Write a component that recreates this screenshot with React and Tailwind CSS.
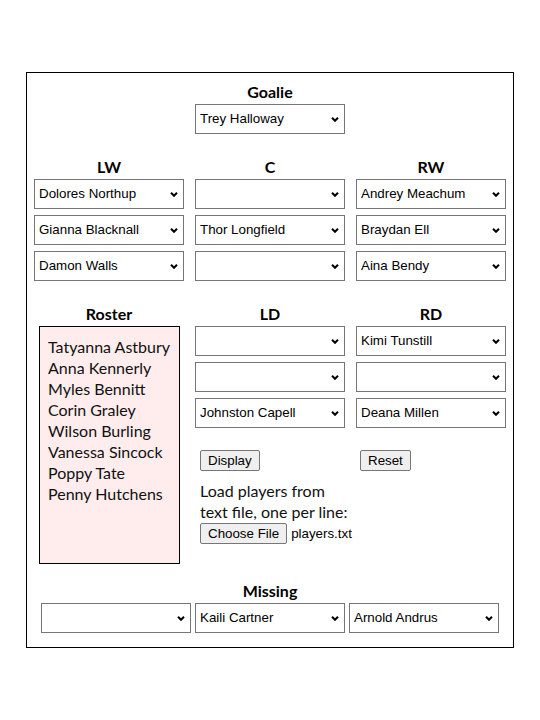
import React, { useState } from 'react';

const players = [
  'Trey Halloway', 'Dolores Northup', 'Gianna Blacknall', 'Damon Walls', 'Thor Longfield',
  'Andrey Meachum', 'Braydan Ell', 'Aina Bendy', 'Kimi Tunstill', 'Johnston Capell',
  'Deana Millen', 'Kaili Cartner', 'Arnold Andrus'
];

const roster = [
  'Tatyanna Astbury', 'Anna Kennerly', 'Myles Bennitt', 'Corin Graley',
  'Wilson Burling', 'Vanessa Sincock', 'Poppy Tate', 'Penny Hutchens'
];

const arial = { fontFamily: '"Liberation Sans", Arial, sans-serif' };

// select with its own chevron so it renders the same everywhere
const PlayerSelect = ({ value }) => {
  const [val, setVal] = useState(value || '');
  return (
    <div className="relative w-[150px] h-[30px]">
      <select
        value={val}
        onChange={(e) => setVal(e.target.value)}
        className="appearance-none w-full h-full bg-white border border-[#767676] pl-[4px] pr-5 text-[13.33px] text-black outline-none"
        style={arial}
      >
        <option value=""></option>
        {players.map((p) => (
          <option key={p} value={p}>{p}</option>
        ))}
      </select>
      <svg className="absolute right-[6px] top-[13px] pointer-events-none" width="8" height="5" viewBox="0 0 8 5">
        <path d="M1 0.8 L4 3.8 L7 0.8" fill="none" stroke="#000" strokeWidth="2" />
      </svg>
    </div>
  );
};

const Heading = ({ children }) => (
  <h3 className="text-[16px] font-bold leading-[21px] mb-[2px] text-center text-black">{children}</h3>
);

const Btn = ({ children }) => (
  <button
    className="h-[21px] px-[7px] bg-[#efefef] border border-[#767676] rounded-[2px] text-[13.33px] text-black leading-none whitespace-nowrap"
    style={arial}
  >
    {children}
  </button>
);

const Column = ({ title, values, children }) => (
  <div>
    <Heading>{title}</Heading>
    <div className="flex flex-col gap-[6px]">
      {values.map((v, i) => (
        <PlayerSelect key={i} value={v} />
      ))}
    </div>
    {children}
  </div>
);

export default function App() {
  return (
    <div className="min-h-screen bg-white pt-[72px]" style={{ fontFamily: 'Lato, "Open Sans", sans-serif' }}>
      <div className="w-[488px] h-[576px] mx-auto border border-black pt-[8px] flex flex-col">
        {/* Goalie */}
        <div className="flex flex-col items-center">
          <Heading>Goalie</Heading>
          <PlayerSelect value="Trey Halloway" />
        </div>

        {/* Forwards */}
        <div className="grid grid-cols-[150px_150px_150px] gap-x-[11px] pl-[7px] mt-[22px]">
          <Column title="LW" values={['Dolores Northup', 'Gianna Blacknall', 'Damon Walls']} />
          <Column title="C" values={['', 'Thor Longfield', '']} />
          <Column title="RW" values={['Andrey Meachum', 'Braydan Ell', 'Aina Bendy']} />
        </div>

        {/* Defence and roster */}
        <div className="grid grid-cols-[150px_150px_150px] gap-x-[11px] pl-[7px] mt-[22px]">
          <div>
            <Heading>Roster</Heading>
            <div className="ml-[5px] w-[141px] h-[238px] border border-black bg-[#ffeded] pt-[9px] px-[8px] text-[16px] leading-[21px] text-[#111]">
              {roster.map((r) => (
                <div key={r}>{r}</div>
              ))}
            </div>
          </div>
          <Column title="LD" values={['', '', 'Johnston Capell']}>
            <div className="pl-[5px] mt-[19px]">
              <Btn>Display</Btn>
              <p className="mt-[9px] text-[16px] leading-[21px] text-[#111] whitespace-nowrap">
                Load players from<br />text file, one per line:
              </p>
              <div className="mt-[1px] flex items-center gap-[4px]">
                <Btn>Choose File</Btn>
                <span className="text-[13.33px] text-black" style={arial}>players.txt</span>
              </div>
            </div>
          </Column>
          <Column title="RD" values={['Kimi Tunstill', '', 'Deana Millen']}>
            <div className="pl-[4px] mt-[19px]">
              <Btn>Reset</Btn>
            </div>
          </Column>
        </div>

        {/* Missing */}
        <div className="flex flex-col items-center mt-[16px]">
          <Heading>Missing</Heading>
          <div className="flex gap-[4px]">
            <PlayerSelect value="" />
            <PlayerSelect value="Kaili Cartner" />
            <PlayerSelect value="Arnold Andrus" />
          </div>
        </div>
      </div>
    </div>
  );
}
